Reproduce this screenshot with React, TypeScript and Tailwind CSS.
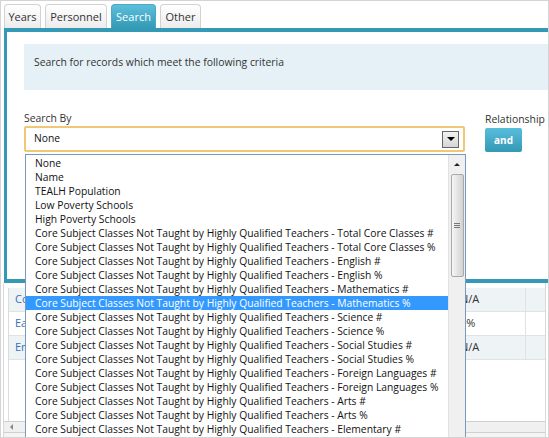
import React from "react";

const font = { fontFamily: '"Open Sans", "DejaVu Sans", sans-serif' };

const tabs = [
  { label: "Years", w: "w-[37px]" },
  { label: "Personnel", w: "w-[62px]" },
  { label: "Search", w: "w-[45px]", active: true },
  { label: "Other", w: "w-[41px]" },
];

const prefix = "Core Subject Classes Not Taught by Highly Qualified Teachers - ";
const options = [
  "None",
  "Name",
  "TEALH Population",
  "Low Poverty Schools",
  "High Poverty Schools",
  ...[
    "Total Core Classes #",
    "Total Core Classes %",
    "English #",
    "English %",
    "Mathematics #",
    "Mathematics %",
    "Science #",
    "Science %",
    "Social Studies #",
    "Social Studies %",
    "Foreign Languages #",
    "Foreign Languages %",
    "Arts #",
    "Arts %",
    "Elementary #",
    "Elementary %",
  ].map((s) => prefix + s),
];

const rows = [
  { name: "Core Subject Classes", value: "N/A", shade: true },
  { name: "Early Childhood", value: "0%", shade: false },
  { name: "Enrollment", value: "N/A", shade: true },
];

const Tab = ({ label, w, active }: { label: string; w: string; active?: boolean }) => (
  <div
    className={
      "h-[24px] rounded-t-[4px] border border-b-0 flex justify-center pt-[4px] text-[11px] " +
      w +
      (active
        ? " border-[#4aa9c4] bg-gradient-to-b from-[#5cc0dc] to-[#3399b5] text-white"
        : " border-[#d2d2d2] bg-gradient-to-b from-white to-[#ececec] text-[#333]")
    }
  >
    {label}
  </div>
);

const Scrollbar = () => (
  <div className="w-[17px] h-full bg-[#f0f0f0] border-l border-[#e2e2e2] flex flex-col items-center">
    <div className="h-[18px] flex items-center justify-center">
      <div className="w-0 h-0 border-l-[3px] border-r-[3px] border-b-[3px] border-l-transparent border-r-transparent border-b-[#222]" />
    </div>
    <div className="mt-[1px] w-[13px] h-[103px] rounded-[2px] border border-[#a9a9a9] bg-gradient-to-r from-[#f6f6f6] via-[#e4e4e4] to-[#d2d2d2] flex flex-col items-center justify-center gap-[1px]">
      <div className="w-[6px] h-[1px] bg-[#777]" />
      <div className="w-[6px] h-[1px] bg-[#777]" />
      <div className="w-[6px] h-[1px] bg-[#777]" />
    </div>
    <div className="flex-1" />
    <div className="h-[14px] mb-[8px] flex items-center justify-center">
      <div className="w-0 h-0 border-l-[3px] border-r-[3px] border-t-[3px] border-l-transparent border-r-transparent border-t-[#555]" />
    </div>
  </div>
);

const DropdownList = () => (
  <div className="absolute left-[24px] top-[153px] w-[441px] h-[300px] bg-white border border-[#7a98bb] flex">
    <div className="flex-1 pt-[1px] overflow-hidden">
      {options.map((o) => (
        <div
          key={o}
          className={
            "h-[14px] leading-[14px] pl-[9px] text-[10.3px] whitespace-nowrap " +
            (o.endsWith("Mathematics %") ? "bg-[#3399ff] text-white" : "text-[#111]")
          }
        >
          {o}
        </div>
      ))}
    </div>
    <Scrollbar />
  </div>
);

export default function App() {
  return (
    <div
      className="relative w-[549px] h-[438px] overflow-hidden bg-white border border-[#d4d4d4] flex flex-col"
      style={font}
    >
      <div className="flex gap-[4px] pl-[3px] pt-[3px] h-[27px]">
        {tabs.map((t) => (
          <Tab key={t.label} {...t} />
        ))}
      </div>
      <div className="ml-[3px] h-[255px] border-l-[3px] border-t-[4px] border-b-[4px] border-[#3399b5] pl-[17px] pt-[12px]">
        <div className="h-[46px] bg-[#e6f1f7] pl-[10px] pt-[11px] text-[10.4px] leading-[14px] text-[#333]">
          Search for records which meet the following criteria
        </div>
        <div className="flex mt-[22px]">
          <div className="w-[441px]">
            <div className="text-[10.4px] leading-[12px] text-[#333]">Search By</div>
            <div className="mt-[2px] h-[26px] rounded-[2px] border-2 border-[#f0c775] flex items-center pl-[8px] pr-[4px]">
              <span className="flex-1 text-[10.3px] text-[#111]">None</span>
              <div className="w-[17px] h-[17px] border border-[#666] bg-gradient-to-b from-[#f2f2f2] to-[#d6d6d6] flex items-center justify-center">
                <div className="w-0 h-0 border-l-[4px] border-r-[4px] border-t-[4px] border-l-transparent border-r-transparent border-t-black" />
              </div>
            </div>
          </div>
          <div className="ml-[20px] pt-[1px]">
            <div className="text-[10.4px] leading-[12px] text-[#333] whitespace-nowrap">Relationship</div>
            <div className="mt-[3px] w-[37px] h-[24px] rounded-[2px] bg-gradient-to-b from-[#58bddb] to-[#3399b5] text-white font-bold text-[10px] flex items-center justify-center">
              and
            </div>
          </div>
        </div>
      </div>
      <div className="flex-1 mx-[2px] border-l border-r border-[#d8d8d8] flex flex-col pt-[5px]">
        <div className="ml-[4px] border-l border-[#dcdcdc] flex-1 flex flex-col">
          {rows.map((r) => (
            <div
              key={r.name}
              className={
                "h-[24px] flex border-b border-[#e2e2e2] text-[11px] " +
                (r.shade ? "bg-[#eef3f6]" : "bg-white")
              }
            >
              <div className="w-[446px] pl-[6px] flex items-center text-[#3a6fb5] whitespace-nowrap overflow-hidden">
                {r.name}
              </div>
              <div className="w-[71px] pl-[5px] flex items-center border-r border-[#e2e2e2] text-[#333]">
                {r.value}
              </div>
              <div className="flex-1" />
            </div>
          ))}
          <div className="flex-1" />
        </div>
        <div className="h-[12px] border-t border-b border-[#d0d0d0] bg-[#f0f0f0] flex items-center pl-[6px]">
          <div className="w-0 h-0 border-t-[3px] border-b-[3px] border-r-[3px] border-t-transparent border-b-transparent border-r-[#888]" />
        </div>
        <div className="h-[4px] bg-[#f4f4f4]" />
      </div>
      <DropdownList />
    </div>
  );
}
